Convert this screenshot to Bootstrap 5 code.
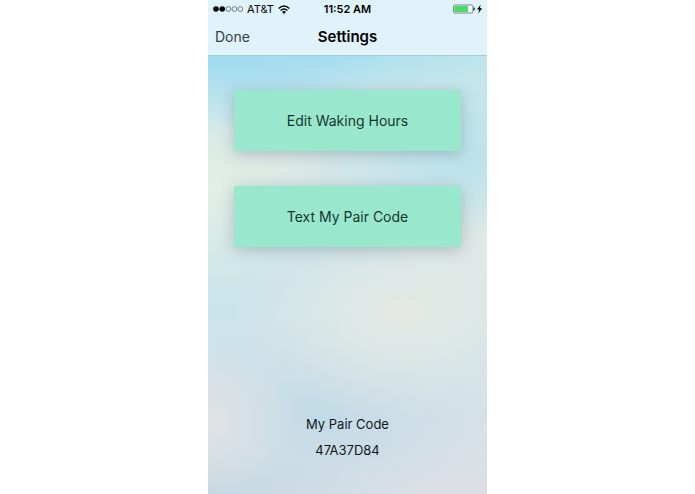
<!DOCTYPE html>
<html lang="en">
<head>
<meta charset="utf-8">
<meta name="viewport" content="width=device-width, initial-scale=1">
<title>Settings</title>
<link href="https://cdn.jsdelivr.net/npm/bootstrap@5.3.0/dist/css/bootstrap.min.css" rel="stylesheet">
<style>
body { font-family: Inter, "Liberation Sans", sans-serif; background: #fff; color: #10181b; }
.phone {
  max-width: 279px;
  background:
    radial-gradient(ellipse 60% 15% at 5% 11%, #a0dbf0 0%, #a0dbf000 100%),
    radial-gradient(ellipse 75% 7% at 40% 11%, #a5dff0 0%, #a5dff000 100%),
    radial-gradient(ellipse 45% 24% at 0% 38%, #e3eee5 0%, #e3eee500 100%),
    radial-gradient(ellipse 55% 10% at 25% 34%, #dae7e4 0%, #dae7e400 100%),
    radial-gradient(ellipse 50% 16% at 92% 32%, #bce2ec 0%, #bce2ec00 100%),
    radial-gradient(ellipse 60% 22% at 70% 63%, #e5e9e4 0%, #e5e9e488 50%, #e5e9e400 100%),
    radial-gradient(ellipse 40% 24% at 100% 48%, #dfe8e5 0%, #dfe8e500 100%),
    radial-gradient(ellipse 32% 16% at 0% 85%, #dfe2e4 0%, #dfe2e400 100%),
    radial-gradient(ellipse 60% 20% at 40% 84%, #c2dbe6 0%, #c2dbe600 100%),
    radial-gradient(ellipse 60% 12% at 0% 100%, #c3d7e2 0%, #c3d7e200 100%),
    linear-gradient(#c4e6ec 0%, #cbe4ea 65%, #d7e1e7 85%, #dbdfe4 100%);
}
.top-bar { background: #e0f3fa; border-bottom: 1px solid #a9cbd7; color: #000; }
.status { height: 18px; font-size: 11px; line-height: 18px; }
.side { flex: 1 1 0; }
.title-row { height: 37px; line-height: 37px; padding: 0 7px; }
.title-row h1 { font-size: 15px; line-height: 37px; }
.done { color: #333e43; font-size: 14px; line-height: 37px; }
.actions { padding: 34px 26px; gap: 35px; }
.action {
  --bs-btn-bg: #99e8ce; --bs-btn-color: #17352d;
  --bs-btn-hover-bg: #8bdfc3; --bs-btn-hover-color: #17352d;
  --bs-btn-active-bg: #7fd6b9; --bs-btn-active-color: #17352d;
  --bs-btn-border-width: 0;
  --bs-btn-font-size: 14px; --bs-btn-line-height: 21px;
  --bs-btn-padding-y: 20px;
  --bs-btn-border-radius: 0;
  box-shadow: 0 3px 14px rgba(75, 95, 110, .32);
}
.pair { font-size: 13px; line-height: 18px; padding-bottom: 35px; gap: 8px; }
</style>
</head>
<body>
<div class="phone mx-auto min-vh-100 d-flex flex-column">
  <header class="top-bar">
    <div class="status d-flex px-1">
      <div class="side d-flex align-items-center gap-1">
        <svg width="31" height="8" viewBox="0 0 31 8" role="img" aria-label="Signal 2 of 5">
          <g fill="#000"><circle cx="4" cy="4" r="2.8"/><circle cx="10.2" cy="4" r="2.8"/></g>
          <g fill="none" stroke="#333" stroke-width=".6"><circle cx="16.4" cy="4" r="2.4"/><circle cx="22.4" cy="4" r="2.4"/><circle cx="28.4" cy="4" r="2.4"/></g>
        </svg>
        <span>AT&amp;T</span>
        <svg width="12" height="9" viewBox="0 0 12 9" role="img" aria-label="Wi-Fi">
          <g fill="none" stroke="#000" stroke-width="1.4"><path d="M.7 3.4Q6-1.4 11.3 3.4"/><path d="M2.6 5.4Q6 2.4 9.4 5.4"/></g>
          <path d="M4 6.8Q6 5.2 8 6.8L6 8.9Z"/>
        </svg>
      </div>
      <span class="fw-semibold">11:52 AM</span>
      <div class="side d-flex align-items-center justify-content-end">
        <svg width="30" height="10" viewBox="0 0 30 10" role="img" aria-label="Battery charging">
          <rect x=".5" y="1" width="19.4" height="8" rx="1.4" fill="#eefafa" stroke="#58686a" stroke-width=".8"/>
          <rect x="1.4" y="1.9" width="13.6" height="6.2" rx=".5" fill="#4cd964"/>
          <path d="M20.4 3.2Q22 3.5 22 5T20.4 6.8Z" fill="#333"/>
          <path d="M27.6 .8L24 5.6H26.3L25.1 9.4L29.2 4.3H26.9Z"/>
        </svg>
      </div>
    </div>
    <nav class="title-row d-flex">
      <div class="side"><a href="#" class="done text-decoration-none">Done</a></div>
      <h1 class="fw-semibold m-0">Settings</h1>
      <div class="side"></div>
    </nav>
  </header>
  <main class="flex-grow-1 d-flex flex-column justify-content-between">
    <div class="actions d-grid">
      <button type="button" class="btn action">Edit Waking Hours</button>
      <button type="button" class="btn action">Text My Pair Code</button>
    </div>
    <div class="pair d-flex flex-column text-center">
      <span>My Pair Code</span>
      <span>47A37D84</span>
    </div>
  </main>
</div>
<script src="https://cdn.jsdelivr.net/npm/bootstrap@5.3.0/dist/js/bootstrap.bundle.min.js"></script>
</body>
</html>
